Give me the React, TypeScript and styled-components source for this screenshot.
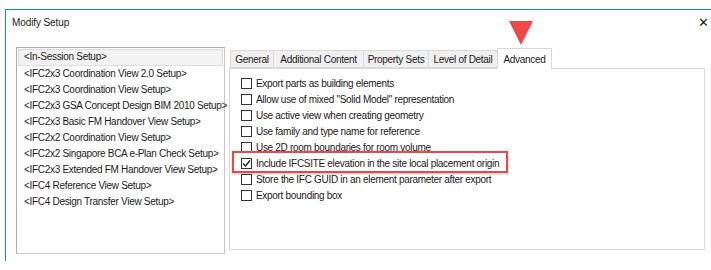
import React from "react";
import styled, { createGlobalStyle } from "styled-components";

const GlobalStyle = createGlobalStyle`
	html, body {
		margin: 0;
		padding: 0;
		background: #ffffff;
	}
	body {
		font-family: "Liberation Sans", Arial, sans-serif;
		font-size: 10px;
		letter-spacing: -0.3px;
		color: #1a1a1a;
	}
`;

const Page = styled.div`
	width: 711px;
	height: 270px;
	padding: 9px 0 0 5px;
	box-sizing: border-box;
	overflow: hidden;
`;

const Window = styled.div`
	position: relative;
	height: 251px;
	border-left: 1px solid #1883d7;
	border-top: 1px solid #1883d7;
	background: #ffffff;
`;

const TitleBar = styled.div`
	display: flex;
	align-items: center;
	justify-content: space-between;
	height: 24px;
	padding: 0 1px 0 6px;
	letter-spacing: -0.1px;
`;

const CloseButton = styled.div`
	width: 14px;
	display: flex;
	justify-content: center;
	font-size: 13px;
	color: #222;
`;

const Body = styled.div`
	display: flex;
	align-items: flex-start;
	padding: 13px 0 0 10px;
`;

const ListBox = styled.div`
	width: 209px;
	height: 207px;
	border: 1px solid #c8c8c8;
	border-left-color: #adadad;
	border-top-color: #adadad;
	padding: 1px;
	box-sizing: border-box;
`;

const ListItem = styled.div<{ $selected?: boolean }>`
	height: 16px;
	line-height: 14px;
	padding-left: 5px;
	white-space: nowrap;
	background: ${(p) => (p.$selected ? "#f3f3f3" : "transparent")};
	border: 1px solid ${(p) => (p.$selected ? "#dcdcdc" : "transparent")};
	box-sizing: border-box;
	&:first-child {
		height: 17px;
	}
`;

const TabArea = styled.div`
	margin-left: 4px;
	width: 476px;
	margin-top: 1px;
`;

const TabStrip = styled.div`
	display: flex;
	align-items: flex-end;
	height: 20px;
	padding-left: 2px;
`;

const Tab = styled.div<{ $active?: boolean; $w: number }>`
	position: relative;
	width: ${(p) => p.$w}px;
	height: ${(p) => (p.$active ? "21px" : "18px")};
	box-sizing: border-box;
	display: flex;
	align-items: center;
	justify-content: center;
	background: ${(p) => (p.$active ? "#ffffff" : "#f0f0f0")};
	border: 1px solid #d9d9d9;
	border-bottom: ${(p) => (p.$active ? "none" : "1px solid #d9d9d9")};
	margin-left: -1px;
	margin-bottom: ${(p) => (p.$active ? "-1px" : "0")};
	z-index: ${(p) => (p.$active ? 1 : 0)};
	white-space: nowrap;
`;

const Panel = styled.div`
	height: 182px;
	border: 1px solid #d9d9d9;
	box-sizing: border-box;
	padding: 6px 0 0 11px;
`;

const OptionRow = styled.label<{ $highlight?: boolean }>`
	position: relative;
	display: flex;
	align-items: center;
	width: fit-content;
	height: 16px;
	white-space: nowrap;

	${(p) =>
		p.$highlight &&
		`
		&::after {
			content: "";
			position: absolute;
			top: -4px;
			bottom: -2px;
			left: -9px;
			right: -9px;
			border: 2px solid #e94848;
			box-shadow: 0 1px 2px rgba(0, 0, 0, 0.25);
			pointer-events: none;
		}
	`}
`;

const Box = styled.span`
	width: 11px;
	height: 11px;
	box-sizing: border-box;
	border: 1px solid #333333;
	background: #ffffff;
	margin-right: 4px;
	display: flex;
	align-items: center;
	justify-content: center;
`;

const Pointer = styled.svg`
	position: absolute;
	left: 502px;
	top: 10px;
`;

const setups = [
	"<In-Session Setup>",
	"<IFC2x3 Coordination View 2.0 Setup>",
	"<IFC2x3 Coordination View Setup>",
	"<IFC2x3 GSA Concept Design BIM 2010 Setup>",
	"<IFC2x3 Basic FM Handover View Setup>",
	"<IFC2x2 Coordination View Setup>",
	"<IFC2x2 Singapore BCA e-Plan Check Setup>",
	"<IFC2x3 Extended FM Handover View Setup>",
	"<IFC4 Reference View Setup>",
	"<IFC4 Design Transfer View Setup>",
];

const tabs = [
	{ label: "General", w: 44 },
	{ label: "Additional Content", w: 91 },
	{ label: "Property Sets", w: 66 },
	{ label: "Level of Detail", w: 70 },
	{ label: "Advanced", w: 55, active: true },
];

const options = [
	{ label: "Export parts as building elements" },
	{ label: 'Allow use of mixed "Solid Model" representation' },
	{ label: "Use active view when creating geometry" },
	{ label: "Use family and type name for reference" },
	{ label: "Use 2D room boundaries for room volume" },
	{ label: "Include IFCSITE elevation in the site local placement origin", checked: true },
	{ label: "Store the IFC GUID in an element parameter after export" },
	{ label: "Export bounding box" },
];

const App: React.FC = () => {
	return (
		<Page>
			<GlobalStyle />
			<Window>
				<TitleBar>
					<span>Modify Setup</span>
					<CloseButton>✕</CloseButton>
				</TitleBar>
				<Body>
					<ListBox>
						{setups.map((s, i) => (
							<ListItem key={s} $selected={i === 0}>
								{s}
							</ListItem>
						))}
					</ListBox>
					<TabArea>
						<TabStrip>
							{tabs.map((t) => (
								<Tab key={t.label} $w={t.w} $active={t.active}>
									{t.label}
								</Tab>
							))}
						</TabStrip>
						<Panel>
							{options.map((o) => (
								<OptionRow key={o.label} $highlight={o.checked}>
									<Box>
										{o.checked && (
											<svg width="9" height="9" viewBox="0 0 9 9">
												<path d="M1 4.5 L3.5 7 L8 1.5" fill="none" stroke="#222" strokeWidth="1.4" />
											</svg>
										)}
									</Box>
									{o.label}
								</OptionRow>
							))}
						</Panel>
					</TabArea>
				</Body>
				<Pointer width="26" height="26" viewBox="0 0 26 26">
					<path d="M1 1 L25 1 L13 25 Z" fill="#f04848" />
				</Pointer>
			</Window>
		</Page>
	);
};

export default App;
